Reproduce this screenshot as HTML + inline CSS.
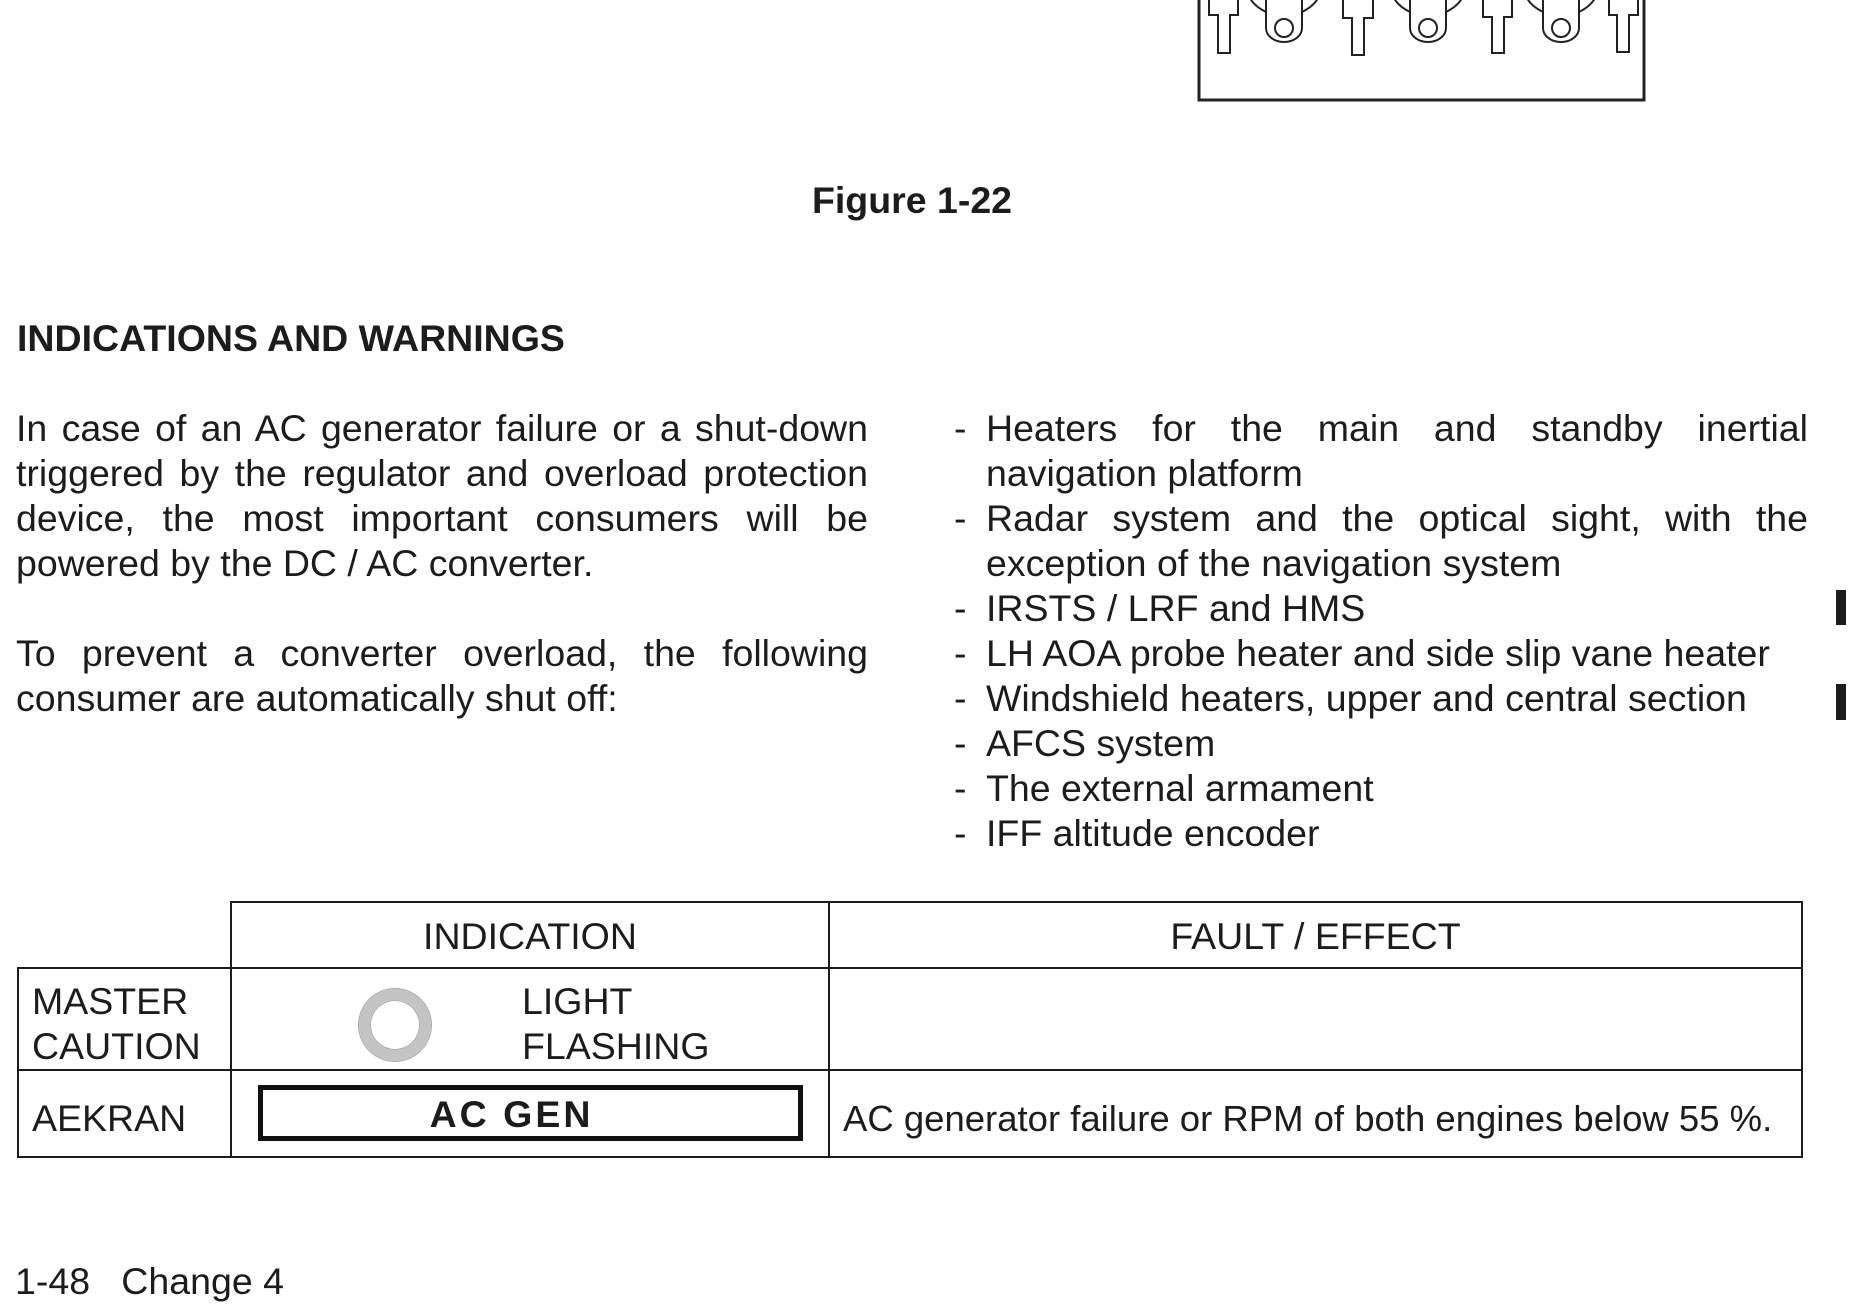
<!DOCTYPE html>
<html><head><meta charset="utf-8"><style>
html,body{margin:0;padding:0;background:#fff;}
body{width:1856px;height:1312px;position:relative;overflow:hidden;font-family:"Liberation Sans",Arial,sans-serif;color:#1c1c1c;}
.t{position:absolute;white-space:nowrap;font-size:37.5px;line-height:45px;}
.j{position:absolute;font-size:37.5px;line-height:45px;text-align:justify;text-align-last:justify;white-space:nowrap;}
.b{font-weight:bold;}
.ln{position:absolute;background:#1c1c1c;}
</style></head><body>

<svg style="position:absolute;left:0;top:0" width="1856" height="110">
<g fill="none" stroke="#222" stroke-width="2">
<rect x="1199" y="-10" width="445" height="110" stroke-width="3"/>
<path d="M1209 -2 V15 H1218 V53 H1230 V15 H1238 V-2"/>
<path d="M1343 -2 V18 H1352 V55 H1364 V18 H1373 V-2"/>
<path d="M1483 -2 V17 H1492 V53 H1504 V17 H1512 V-2"/>
<path d="M1609 -2 V15 H1617 V52 H1629 V15 H1638 V-2"/>
<g id="lug"><path d="M1266 -2 V28 A18 14 0 0 0 1302 28 V-2"/><circle cx="1284" cy="28" r="9"/><path d="M1266 12 Q1254 6 1250 -2 M1302 12 Q1314 6 1318 -2"/></g>
<use href="#lug" x="144"/><use href="#lug" x="277"/>
</g></svg>

<div class="t b" style="left:762px;top:178px;width:300px;text-align:center;">Figure 1-22</div>
<div class="t b" style="left:17px;top:316px;">INDICATIONS AND WARNINGS</div>

<div class="j" style="left:16px;top:406px;width:852px;">In case of an AC generator failure or a shut-down</div>
<div class="j" style="left:16px;top:451px;width:852px;">triggered by the regulator and overload protection</div>
<div class="j" style="left:16px;top:496px;width:852px;">device, the most important consumers will be</div>
<div class="t" style="left:16px;top:541px;">powered by the DC / AC converter.</div>
<div class="j" style="left:16px;top:631px;width:852px;">To prevent a converter overload, the following</div>
<div class="t" style="left:16px;top:676px;">consumer are automatically shut off:</div>

<div class="t" style="left:954px;top:406px;">-</div>
<div class="j" style="left:986px;top:406px;width:822px;">Heaters for the main and standby inertial</div>
<div class="t" style="left:986px;top:451px;">navigation platform</div>
<div class="t" style="left:954px;top:496px;">-</div>
<div class="j" style="left:986px;top:496px;width:822px;">Radar system and the optical sight, with the</div>
<div class="t" style="left:986px;top:541px;">exception of the navigation system</div>
<div class="t" style="left:954px;top:586px;">-</div><div class="t" style="left:986px;top:586px;">IRSTS / LRF and HMS</div>
<div class="t" style="left:954px;top:631px;">-</div><div class="t" style="left:986px;top:631px;">LH AOA probe heater and side slip vane heater</div>
<div class="t" style="left:954px;top:676px;">-</div><div class="t" style="left:986px;top:676px;">Windshield heaters, upper and central section</div>
<div class="t" style="left:954px;top:721px;">-</div><div class="t" style="left:986px;top:721px;">AFCS system</div>
<div class="t" style="left:954px;top:766px;">-</div><div class="t" style="left:986px;top:766px;">The external armament</div>
<div class="t" style="left:954px;top:811px;">-</div><div class="t" style="left:986px;top:811px;">IFF altitude encoder</div>

<div class="ln" style="left:1836px;top:590px;width:10px;height:35px;"></div>
<div class="ln" style="left:1836px;top:684px;width:10px;height:36px;"></div>

<!-- table -->
<div class="ln" style="left:230px;top:901px;width:1573px;height:2px;"></div>
<div class="ln" style="left:17px;top:967px;width:1786px;height:2px;"></div>
<div class="ln" style="left:17px;top:1069px;width:1786px;height:2px;"></div>
<div class="ln" style="left:17px;top:1156px;width:1786px;height:2px;"></div>
<div class="ln" style="left:17px;top:967px;width:2px;height:191px;"></div>
<div class="ln" style="left:230px;top:901px;width:2px;height:257px;"></div>
<div class="ln" style="left:828px;top:901px;width:2px;height:257px;"></div>
<div class="ln" style="left:1801px;top:901px;width:2px;height:257px;"></div>

<div class="t" style="left:231px;top:914px;width:598px;text-align:center;">INDICATION</div>
<div class="t" style="left:829px;top:914px;width:973px;text-align:center;">FAULT / EFFECT</div>
<div class="t" style="left:32px;top:979px;">MASTER</div>
<div class="t" style="left:32px;top:1024px;">CAUTION</div>
<div style="position:absolute;left:359px;top:989px;width:50px;height:50px;border-radius:50%;border:11px solid #c4c4c4;box-shadow:0 0 0 1px #aaa,inset 0 0 0 1px #aaa;"></div>
<div class="t" style="left:522px;top:979px;">LIGHT</div>
<div class="t" style="left:522px;top:1024px;">FLASHING</div>
<div class="t" style="left:32px;top:1096px;">AEKRAN</div>
<div style="position:absolute;left:258px;top:1085px;width:535px;height:46px;border:5px solid #111;"></div>
<div class="t b" style="left:239px;top:1092px;width:545px;text-align:center;letter-spacing:3px;">AC GEN</div>
<div class="t" style="left:843px;top:1096px;font-size:36.5px;">AC generator failure or RPM of both engines below 55 %.</div>

<div class="t" style="left:15px;top:1259px;">1-48&nbsp;&nbsp;&nbsp;Change 4</div>
</body></html>
